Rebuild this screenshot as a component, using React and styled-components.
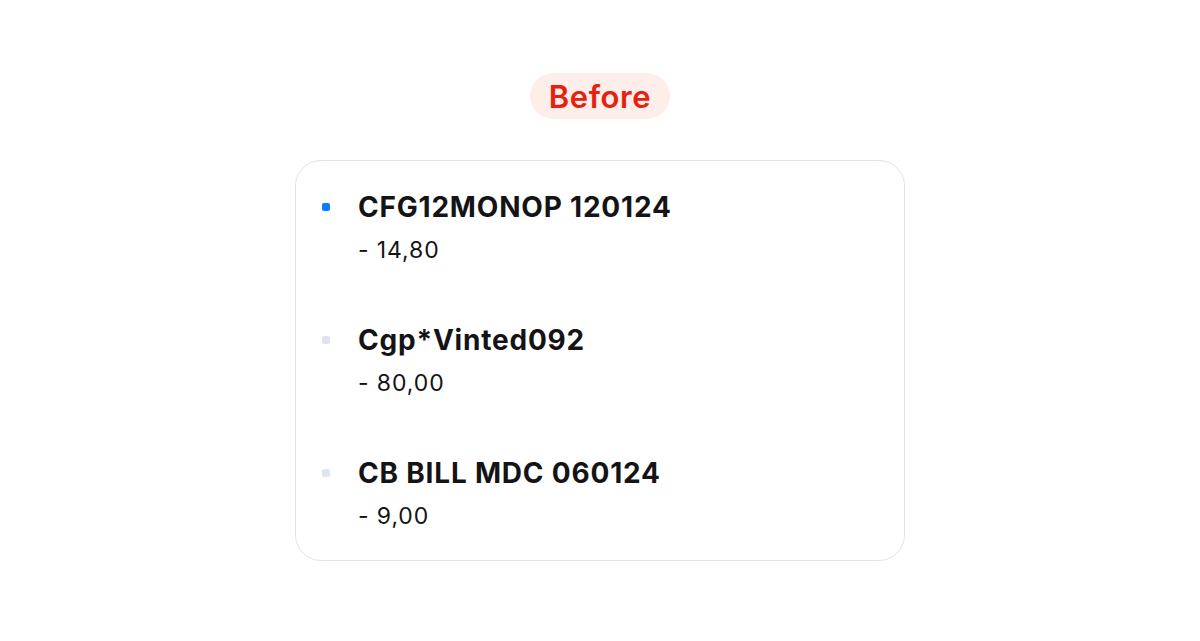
import React from "react";
import styled, { createGlobalStyle } from "styled-components";

const GlobalStyle = createGlobalStyle`
  html, body {
    margin: 0;
    padding: 0;
    background: #ffffff;
  }
  body {
    font-family: "Inter", "Lato", sans-serif;
  }
`;

const Page = styled.div`
  width: 1200px;
  height: 641px;
  display: flex;
  flex-direction: column;
  align-items: center;
  padding-top: 73px;
  box-sizing: border-box;
`;

const Badge = styled.div`
  height: 46px;
  padding: 0 19px;
  display: flex;
  align-items: center;
  border-radius: 23px;
  background: #fdeeea;
  color: #e8200f;
  font-size: 31px;
  font-weight: 600;
  letter-spacing: 0.6px;
`;

const Card = styled.div`
  margin-top: 41px;
  width: 610px;
  height: 401px;
  box-sizing: border-box;
  border: 1.5px solid #e0e2f0;
  border-radius: 26px;
  padding: 27px 26px 0 26px;
  display: flex;
  flex-direction: column;
  gap: 55px;
`;

const Row = styled.div`
  display: flex;
  align-items: flex-start;
  gap: 28px;
`;

const Dot = styled.span`
  flex: none;
  width: 8px;
  height: 8px;
  border-radius: 2px;
  margin-top: 15px;
  background: ${({ $active }) => ($active ? "#0a7cff" : "#dde3ef")};
`;

const Texts = styled.div`
  display: flex;
  flex-direction: column;
  gap: 8px;
`;

const Title = styled.span`
  font-size: 28px;
  line-height: 38px;
  font-weight: 700;
  letter-spacing: 0.8px;
  color: #141416;
`;

const Amount = styled.span`
  font-size: 23px;
  line-height: 32px;
  font-weight: 400;
  letter-spacing: 0.9px;
  color: #141416;
`;

const entries = [
  { label: "CFG12MONOP 120124", amount: "- 14,80", active: true },
  { label: "Cgp*Vinted092", amount: "- 80,00" },
  { label: "CB BILL MDC 060124", amount: "- 9,00" },
];

const App = () => {
  return (
    <>
      <GlobalStyle />
      <Page>
        <Badge>Before</Badge>
        <Card>
          {entries.map((entry) => (
            <Row key={entry.label}>
              <Dot $active={entry.active} />
              <Texts>
                <Title>{entry.label}</Title>
                <Amount>{entry.amount}</Amount>
              </Texts>
            </Row>
          ))}
        </Card>
      </Page>
    </>
  );
};

export default App;
